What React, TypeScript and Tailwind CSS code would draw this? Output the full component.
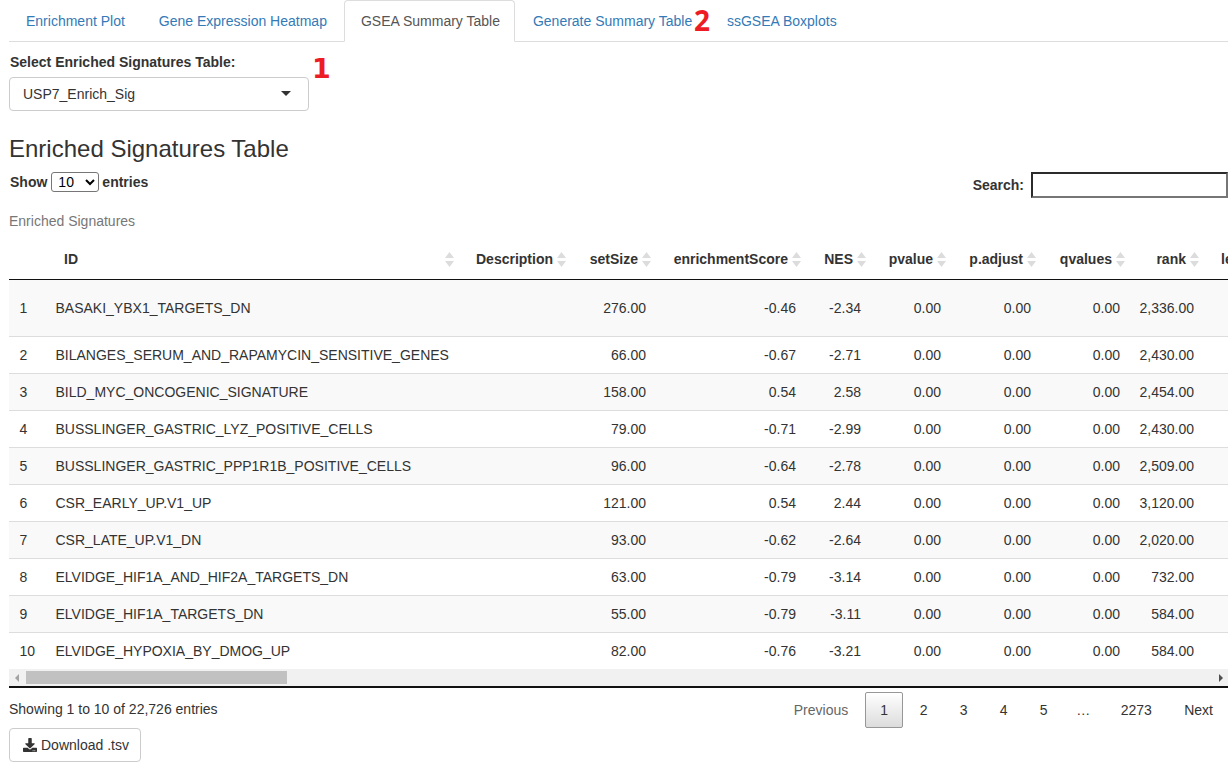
import { FaDownload } from "react-icons/fa";

const rows: string[][] = [
  ["1", "BASAKI_YBX1_TARGETS_DN", "276.00", "-0.46", "-2.34", "2,336.00"],
  ["2", "BILANGES_SERUM_AND_RAPAMYCIN_SENSITIVE_GENES", "66.00", "-0.67", "-2.71", "2,430.00"],
  ["3", "BILD_MYC_ONCOGENIC_SIGNATURE", "158.00", "0.54", "2.58", "2,454.00"],
  ["4", "BUSSLINGER_GASTRIC_LYZ_POSITIVE_CELLS", "79.00", "-0.71", "-2.99", "2,430.00"],
  ["5", "BUSSLINGER_GASTRIC_PPP1R1B_POSITIVE_CELLS", "96.00", "-0.64", "-2.78", "2,509.00"],
  ["6", "CSR_EARLY_UP.V1_UP", "121.00", "0.54", "2.44", "3,120.00"],
  ["7", "CSR_LATE_UP.V1_DN", "93.00", "-0.62", "-2.64", "2,020.00"],
  ["8", "ELVIDGE_HIF1A_AND_HIF2A_TARGETS_DN", "63.00", "-0.79", "-3.14", "732.00"],
  ["9", "ELVIDGE_HIF1A_TARGETS_DN", "55.00", "-0.79", "-3.11", "584.00"],
  ["10", "ELVIDGE_HYPOXIA_BY_DMOG_UP", "82.00", "-0.76", "-3.21", "584.00"],
];

const headers = ["Description", "setSize", "enrichmentScore", "NES", "pvalue", "p.adjust", "qvalues", "rank"];

function SortIcon() {
  return (
    <svg className="absolute right-[5px] top-[11px]" width="9" height="15" viewBox="0 0 9 15">
      <path d="M4.5 0 L9 6 L0 6 Z" fill="#dcdcdc" />
      <path d="M0 9 L9 9 L4.5 15 Z" fill="#dcdcdc" />
    </svg>
  );
}

function Th({ label }: { label: string }) {
  return (
    <th className="relative h-[39px] border-b border-[#111] pr-[18px] pb-[2px] text-right font-bold align-middle">
      {label}
      <SortIcon />
    </th>
  );
}

export default function App() {
  return (
    <div
      className="relative h-[782px] w-[1228px] overflow-hidden bg-white text-[14px] leading-[20px] text-[#333]"
      style={{ fontFamily: '"Liberation Sans", Arial, sans-serif' }}
    >
      <nav className="relative ml-[9px] flex h-[42px] border-b border-[#ddd] text-[#337ab7]">
        <a className="h-[41px] border border-transparent px-4 pt-[10px]">Enrichment Plot</a>
        <a className="h-[41px] border border-transparent px-4 pt-[10px]">Gene Expression Heatmap</a>
        <a className="h-[42px] w-[171px] whitespace-nowrap rounded-t-[4px] border border-[#ddd] border-b-white bg-white px-4 pt-[10px] text-[#555]">
          GSEA Summary Table
        </a>
        <a className="h-[41px] w-[195px] whitespace-nowrap border border-transparent pl-[17px] pr-4 pt-[10px]">Generate Summary Table</a>
        <a className="h-[41px] border border-transparent px-4 pt-[10px]">ssGSEA Boxplots</a>
        <span
          className="absolute left-[685px] top-[3px] text-[28px] font-bold leading-[34px] text-[#ed1c24]"
          style={{ fontFamily: '"Open Sans", sans-serif' }}
        >
          2
        </span>
      </nav>

      <div className="pl-[9px]">
        <div className="relative pt-[10px]">
          <label className="ml-px block font-bold">Select Enriched Signatures Table:</label>
          <span
            className="absolute left-[303px] top-[10px] text-[27px] font-bold leading-[34px] text-[#ed1c24]"
            style={{ fontFamily: '"DejaVu Sans", sans-serif' }}
          >
            1
          </span>
          <div className="relative mt-[5px] flex h-[34px] w-[300px] items-center rounded-[4px] border border-[#ccc] pl-[13px]">
            USP7_Enrich_Sig
            <span className="absolute left-[271px] top-[13px] h-0 w-0 border-x-[5px] border-t-[5px] border-x-transparent border-t-[#333]" />
          </div>
        </div>

        <h3 className="mt-[25px] text-[24px] font-normal leading-[26px]">Enriched Signatures Table</h3>

        <div className="mt-[10px] flex h-[26px] items-start justify-between font-bold">
          <div className="ml-px flex h-[20px] items-center">
            Show
            <select className="ml-[4px] mr-[3px] h-[20px] w-[48px] rounded-[3px] border border-[#767676] bg-white pl-[2px] font-normal text-black">
              <option>10</option>
            </select>
            entries
          </div>
          <div className="flex items-center">
            Search:
            <input className="ml-[7px] h-[26px] w-[197px] border-2 border-t-[#2b2b2b] border-l-[#2b2b2b] border-b-[#767676] border-r-[#767676] bg-white" />
          </div>
        </div>

        <div className="mt-[13px] text-[#777]">Enriched Signatures</div>

        <div className="mt-[10px] w-[1219px] overflow-hidden">
          <table className="w-[1300px] table-fixed border-separate border-spacing-0">
            <colgroup>
              <col className="w-[37px]" />
              <col className="w-[413px]" />
              <col className="w-[112px]" />
              <col className="w-[85px]" />
              <col className="w-[150px]" />
              <col className="w-[65px]" />
              <col className="w-[80px]" />
              <col className="w-[90px]" />
              <col className="w-[89px]" />
              <col className="w-[74px]" />
              <col className="w-[105px]" />
            </colgroup>
            <thead>
              <tr>
                <th className="h-[39px] border-b border-[#111]" />
                <th className="relative h-[39px] border-b border-[#111] pb-[2px] pl-[18px] text-left font-bold">
                  ID
                  <SortIcon />
                </th>
                {headers.map((h) => (
                  <Th key={h} label={h} />
                ))}
                <th className="h-[39px] border-b border-[#111] pb-[2px] pl-[17px] text-left font-bold">leading_edge</th>
              </tr>
            </thead>
            <tbody>
              {rows.map((r, i) => {
                const bg = i % 2 === 0 ? "bg-[#f9f9f9]" : "bg-white";
                const base = i === 0 ? "h-[56px]" : "h-[37px] border-t border-[#ddd]";
                return (
                  <tr key={r[0]} className={bg}>
                    <td className={`${base} pl-[10.5px]`}>{r[0]}</td>
                    <td className={`${base} pl-[9.5px] whitespace-nowrap`}>{r[1]}</td>
                    <td className={base} />
                    <td className={`${base} pr-[10px] text-right`}>{r[2]}</td>
                    <td className={`${base} pr-[10px] text-right`}>{r[3]}</td>
                    <td className={`${base} pr-[10px] text-right`}>{r[4]}</td>
                    <td className={`${base} pr-[10px] text-right`}>0.00</td>
                    <td className={`${base} pr-[10px] text-right`}>0.00</td>
                    <td className={`${base} pr-[10px] text-right`}>0.00</td>
                    <td className={`${base} pr-[10px] text-right`}>{r[5]}</td>
                    <td className={base} />
                  </tr>
                );
              })}
            </tbody>
          </table>
        </div>

        <div className="relative flex h-[17px] w-[1219px] items-center bg-[#f1f1f1] pl-[17px]">
          <svg className="absolute left-[5px] top-[5px]" width="6" height="8" viewBox="0 0 6 8">
            <path d="M5 0 L5 8 L1 4 Z" fill="#a3a3a3" />
          </svg>
          <div className="h-[13px] w-[261px] bg-[#c1c1c1]" />
          <svg className="absolute right-[4px] top-[5px]" width="6" height="8" viewBox="0 0 6 8">
            <path d="M1 0 L1 8 L5 4 Z" fill="#505050" />
          </svg>
        </div>
        <div className="h-[2px] w-[1219px] bg-[#111]" />

        <div className="flex h-[40px] w-[1219px] items-start justify-between">
          <div className="mt-[11px]">Showing 1 to 10 of 22,726 entries</div>
          <div className="mt-[4px] flex h-[36px] items-center gap-[2px] pr-[15px]">
            <span className="pr-[15px] text-[#666]">Previous</span>
            <span className="flex h-[36px] w-[38px] items-center justify-center rounded-[2px] border border-[#979797] bg-gradient-to-b from-white to-[#dcdcdc]">
              1
            </span>
            <span className="w-[38px] pr-px text-center">2</span>
            <span className="w-[38px] pr-px text-center">3</span>
            <span className="w-[38px] pr-px text-center">4</span>
            <span className="w-[38px] pr-px text-center">5</span>
            <span className="w-[36px] text-center">…</span>
            <span className="w-[65px] pl-px text-center">2273</span>
            <span className="pl-[14px]">Next</span>
          </div>
        </div>

        <button className="flex h-[34px] w-[132px] items-center rounded-[4px] border border-[#ccc] bg-white pl-[13px]">
          <FaDownload className="mr-[4px] h-[14px] w-[14px]" />
          Download .tsv
        </button>
      </div>
    </div>
  );
}
